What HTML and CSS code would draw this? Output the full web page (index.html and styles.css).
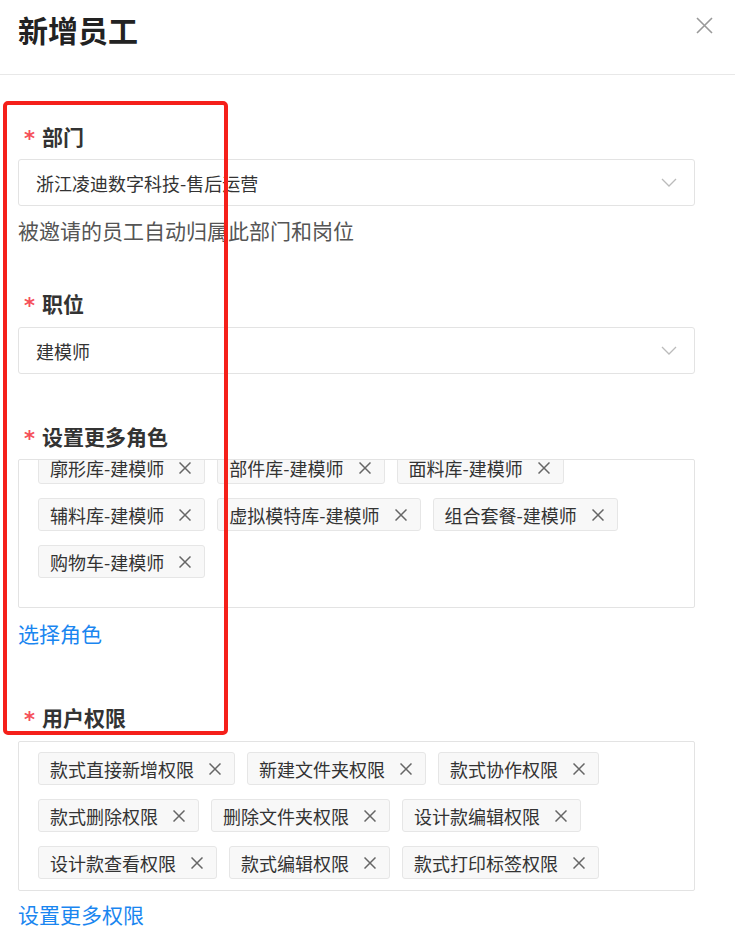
FILE: index.html
```html
<!DOCTYPE html>
<html lang="zh-CN">
<head>
<meta charset="utf-8">
<title>新增员工</title>
<link rel="stylesheet" href="styles.css">
</head>
<body>
<div class="dialog">
  <div class="header">
    <div class="title">新增员工</div>
    <svg class="close" viewBox="0 0 17 17" width="17" height="17"><path d="M1 1L16 16M16 1L1 16" stroke="#999" stroke-width="1.6" fill="none"/></svg>
  </div>
  <div class="body">
    <div class="item item-dept">
      <div class="label"><span class="req">*</span>部门</div>
      <div class="select"><span>浙江凌迪数字科技-售后运营</span><svg class="chev" viewBox="0 0 16 9" width="16" height="9"><path d="M1 1L8 8L15 1" stroke="#bbb" stroke-width="1.3" fill="none"/></svg></div>
      <div class="helper">被邀请的员工自动归属此部门和岗位</div>
    </div>
    <div class="item item-pos">
      <div class="label"><span class="req">*</span>职位</div>
      <div class="select"><span>建模师</span><svg class="chev" viewBox="0 0 16 9" width="16" height="9"><path d="M1 1L8 8L15 1" stroke="#bbb" stroke-width="1.3" fill="none"/></svg></div>
    </div>
    <div class="item item-roles">
      <div class="label"><span class="req">*</span>设置更多角色</div>
      <div class="tag-box tag-box-scroll">
        <div class="tag-list tag-list-scrolled">
          <span class="tag"><span>廓形库-建模师</span><svg class="x" viewBox="0 0 12 12"><path d="M0.5 0.5L11.5 11.5M11.5 0.5L0.5 11.5"/></svg></span>
          <span class="tag"><span>部件库-建模师</span><svg class="x" viewBox="0 0 12 12"><path d="M0.5 0.5L11.5 11.5M11.5 0.5L0.5 11.5"/></svg></span>
          <span class="tag"><span>面料库-建模师</span><svg class="x" viewBox="0 0 12 12"><path d="M0.5 0.5L11.5 11.5M11.5 0.5L0.5 11.5"/></svg></span>
          <span class="tag"><span>辅料库-建模师</span><svg class="x" viewBox="0 0 12 12"><path d="M0.5 0.5L11.5 11.5M11.5 0.5L0.5 11.5"/></svg></span>
          <span class="tag"><span>虚拟模特库-建模师</span><svg class="x" viewBox="0 0 12 12"><path d="M0.5 0.5L11.5 11.5M11.5 0.5L0.5 11.5"/></svg></span>
          <span class="tag"><span>组合套餐-建模师</span><svg class="x" viewBox="0 0 12 12"><path d="M0.5 0.5L11.5 11.5M11.5 0.5L0.5 11.5"/></svg></span>
          <span class="tag"><span>购物车-建模师</span><svg class="x" viewBox="0 0 12 12"><path d="M0.5 0.5L11.5 11.5M11.5 0.5L0.5 11.5"/></svg></span>
        </div>
      </div>
      <a class="link link-roles">选择角色</a>
    </div>
    <div class="item item-perm">
      <div class="label"><span class="req">*</span>用户权限</div>
      <div class="tag-box">
        <div class="tag-list">
          <span class="tag"><span>款式直接新增权限</span><svg class="x" viewBox="0 0 12 12"><path d="M0.5 0.5L11.5 11.5M11.5 0.5L0.5 11.5"/></svg></span>
          <span class="tag"><span>新建文件夹权限</span><svg class="x" viewBox="0 0 12 12"><path d="M0.5 0.5L11.5 11.5M11.5 0.5L0.5 11.5"/></svg></span>
          <span class="tag"><span>款式协作权限</span><svg class="x" viewBox="0 0 12 12"><path d="M0.5 0.5L11.5 11.5M11.5 0.5L0.5 11.5"/></svg></span>
          <span class="tag"><span>款式删除权限</span><svg class="x" viewBox="0 0 12 12"><path d="M0.5 0.5L11.5 11.5M11.5 0.5L0.5 11.5"/></svg></span>
          <span class="tag"><span>删除文件夹权限</span><svg class="x" viewBox="0 0 12 12"><path d="M0.5 0.5L11.5 11.5M11.5 0.5L0.5 11.5"/></svg></span>
          <span class="tag"><span>设计款编辑权限</span><svg class="x" viewBox="0 0 12 12"><path d="M0.5 0.5L11.5 11.5M11.5 0.5L0.5 11.5"/></svg></span>
          <span class="tag"><span>设计款查看权限</span><svg class="x" viewBox="0 0 12 12"><path d="M0.5 0.5L11.5 11.5M11.5 0.5L0.5 11.5"/></svg></span>
          <span class="tag"><span>款式编辑权限</span><svg class="x" viewBox="0 0 12 12"><path d="M0.5 0.5L11.5 11.5M11.5 0.5L0.5 11.5"/></svg></span>
          <span class="tag"><span>款式打印标签权限</span><svg class="x" viewBox="0 0 12 12"><path d="M0.5 0.5L11.5 11.5M11.5 0.5L0.5 11.5"/></svg></span>
        </div>
      </div>
      <a class="link link-perm">设置更多权限</a>
    </div>
  </div>
  <div class="annotation"></div>
</div>
</body>
</html>
```

FILE: styles.css
```css
html, body {
  margin: 0;
  padding: 0;
  background: #fff;
}
body {
  font-family: "Noto Sans CJK SC", "Noto Sans", sans-serif;
  color: #333;
}
.dialog {
  position: relative;
  width: 735px;
  min-height: 949px;
}
.header {
  height: 75px;
  box-sizing: border-box;
  border-bottom: 1px solid #e8e8e8;
  display: flex;
  justify-content: space-between;
  align-items: flex-start;
  padding: 9px 22px 0 18px;
}
.title {
  font-size: 30px;
  line-height: 40px;
  font-weight: 700;
  color: #222;
}
.close {
  margin-top: 8px;
}
.body {
  padding: 47px 40px 0 18px;
}
.label {
  font-size: 21px;
  line-height: 28px;
  font-weight: 700;
  color: #333;
  display: flex;
  align-items: center;
  padding-left: 6px;
  margin-bottom: 9px;
}
.req {
  font-family: "DejaVu Sans", sans-serif;
  color: #f5505a;
  font-weight: 700;
  font-size: 21px;
  line-height: 21px;
  height: 12px;
  width: 18px;
  position: relative;
  top: -1px;
}
.select {
  height: 47px;
  box-sizing: border-box;
  border: 1px solid #e3e3e3;
  border-radius: 3px;
  display: flex;
  align-items: center;
  justify-content: space-between;
  padding: 0 17px 0 17px;
  font-size: 18px;
  color: #333;
}
.helper {
  margin-top: 8px;
  font-size: 21px;
  line-height: 32px;
  color: #555;
}
.item-dept { margin-bottom: 43px; }
.item-pos { margin-bottom: 48px; }
.item-roles { margin-bottom: 55px; }
.item-pos .label { margin-bottom: 10px; }
.item-perm .label { margin-bottom: 10px; }
.tag-box {
  border: 1px solid #e3e3e3;
  border-radius: 2px;
  box-sizing: border-box;
}
.tag-box-scroll {
  height: 149px;
  overflow: hidden;
}
.tag-list {
  display: flex;
  flex-wrap: wrap;
  gap: 14px 12px;
  padding: 10px 19px 11px 19px;
}
.tag-list-scrolled {
  margin-top: -19px;
}
.tag {
  display: inline-flex;
  align-items: center;
  height: 33px;
  box-sizing: border-box;
  padding: 0 13px 0 11px;
  border: 1px solid #e6e6e6;
  border-radius: 3px;
  background: #f8f8f8;
  font-size: 18px;
  color: #333;
  white-space: nowrap;
}
.x {
  width: 12px;
  height: 12px;
  margin-left: 15px;
  stroke: #666;
  stroke-width: 1.5;
  fill: none;
}
.link {
  display: block;
  font-size: 21px;
  line-height: 30px;
  color: #1a86f0;
  cursor: pointer;
}
.link-roles { margin-top: 10px; }
.link-perm { margin-top: 8px; }
.annotation {
  position: absolute;
  left: 3px;
  top: 101px;
  width: 225px;
  height: 634px;
  box-sizing: border-box;
  border: 4px solid #f5201a;
  border-radius: 5px;
  pointer-events: none;
}
```
